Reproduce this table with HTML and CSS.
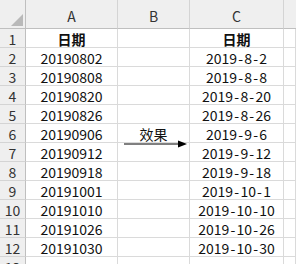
FILE: index.html
```html
<!DOCTYPE html>
<html>
<head>
<meta charset="utf-8">
<link rel="stylesheet" href="styles.css">
</head>
<body>
<div class="sheet">
  <div class="corner"><span class="tri"></span></div>
  <div class="ch">A</div><div class="ch">B</div><div class="ch">C</div><div class="ch last"></div>

  <div class="rh">1</div><div class="c b">日期</div><div class="c"></div><div class="c b">日期</div><div class="c"></div>
  <div class="rh">2</div><div class="c">20190802</div><div class="c"></div><div class="c">2019<i>-</i>8<i>-</i>2</div><div class="c"></div>
  <div class="rh">3</div><div class="c">20190808</div><div class="c"></div><div class="c">2019<i>-</i>8<i>-</i>8</div><div class="c"></div>
  <div class="rh">4</div><div class="c">20190820</div><div class="c"></div><div class="c">2019<i>-</i>8<i>-</i>20</div><div class="c"></div>
  <div class="rh">5</div><div class="c">20190826</div><div class="c"></div><div class="c">2019<i>-</i>8<i>-</i>26</div><div class="c"></div>
  <div class="rh">6</div><div class="c">20190906</div><div class="c">效果</div><div class="c">2019<i>-</i>9<i>-</i>6</div><div class="c"></div>
  <div class="rh">7</div><div class="c">20190912</div><div class="c"></div><div class="c">2019<i>-</i>9<i>-</i>12</div><div class="c"></div>
  <div class="rh">8</div><div class="c">20190918</div><div class="c"></div><div class="c">2019<i>-</i>9<i>-</i>18</div><div class="c"></div>
  <div class="rh">9</div><div class="c">20191001</div><div class="c"></div><div class="c">2019<i>-</i>10<i>-</i>1</div><div class="c"></div>
  <div class="rh">10</div><div class="c">20191010</div><div class="c"></div><div class="c">2019<i>-</i>10<i>-</i>10</div><div class="c"></div>
  <div class="rh">11</div><div class="c">20191026</div><div class="c"></div><div class="c">2019<i>-</i>10<i>-</i>26</div><div class="c"></div>
  <div class="rh">12</div><div class="c">20191030</div><div class="c"></div><div class="c">2019<i>-</i>10<i>-</i>30</div><div class="c"></div>
  <div class="rh">13</div><div class="c"></div><div class="c"></div><div class="c"></div><div class="c"></div>

  <svg class="arrow" width="66" height="10" viewBox="0 0 66 10">
    <line x1="0" y1="5" x2="56" y2="5" stroke="#000" stroke-width="1"/>
    <polygon points="54,1.5 63,5 54,8.5" fill="#000"/>
  </svg>
</div>
</body>
</html>
```

FILE: styles.css
```css
html, body {
  margin: 0;
  padding: 0;
  background: #fff;
}
body {
  width: 296px;
  height: 264px;
  overflow: hidden;
  font-family: "Noto Sans CJK SC", "Noto Sans", sans-serif;
}
.sheet {
  position: relative;
  display: grid;
  grid-template-columns: 26px 92px 72px 94px 1fr;
  grid-template-rows: 29px;
  grid-auto-rows: 19px;
  width: 296px;
}
.sheet > div {
  box-sizing: border-box;
}
.corner {
  position: relative;
  background: #efefef;
  border-right: 1px solid #bfbfbf;
  border-bottom: 1px solid #bfbfbf;
}
.tri {
  position: absolute;
  right: 2px;
  bottom: 2px;
  width: 0;
  height: 0;
  border-left: 12px solid transparent;
  border-bottom: 12px solid #b9b9b9;
}
.ch {
  background: #efefef;
  border-right: 1px solid #d4d4d4;
  border-bottom: 1px solid #bfbfbf;
  color: #333;
  font-size: 14px;
  line-height: 14px;
  display: flex;
  align-items: flex-end;
  justify-content: center;
  padding-bottom: 5px;
}
.ch.last {
  border-right: none;
}
.rh {
  background: #efefef;
  border-right: 1px solid #bfbfbf;
  border-bottom: 1px solid #d4d4d4;
  color: #333;
  font-size: 14px;
  line-height: 18px;
  text-align: center;
  padding-top: 1px;
}
.c {
  border-right: 1px solid #dadada;
  border-bottom: 1px solid #dadada;
  color: #111;
  font-size: 14px;
  line-height: 18px;
  text-align: center;
  padding-top: 1px;
  white-space: nowrap;
}
.c i {
  font-style: normal;
  padding: 0 1.2px;
}
.c.b {
  font-weight: bold;
}
.arrow {
  position: absolute;
  left: 124px;
  top: 139px;
}
```
